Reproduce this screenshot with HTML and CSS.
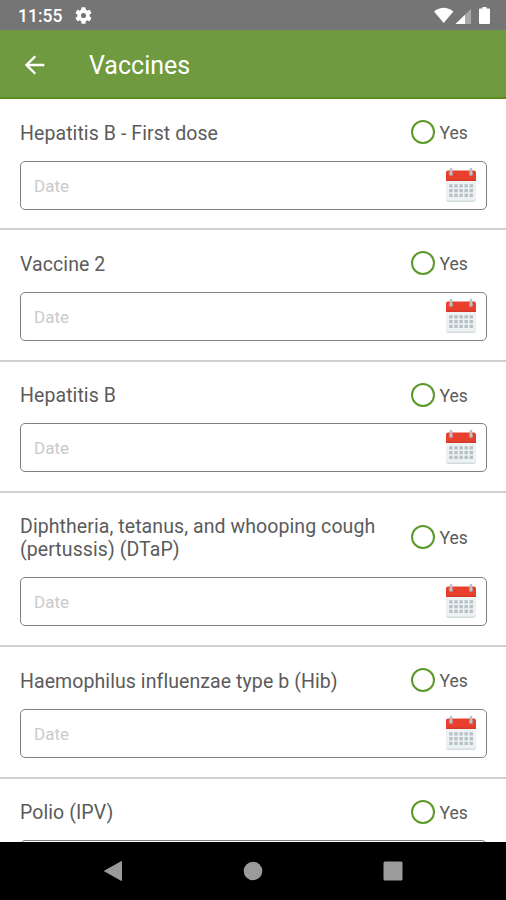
FILE: index.html
```html
<!DOCTYPE html>
<html lang="en">
<head>
<meta charset="utf-8">
<title>Vaccines</title>
<link rel="stylesheet" href="styles.css">
</head>
<body>
<svg class="defs" aria-hidden="true">
  <symbol id="calendar" viewBox="0 0 32 36">
    <rect x="1.2" y="14" width="29.6" height="21" rx="2.5" fill="#d3dcdf"/>
    <path d="M1.2 12h29.6v19.500a2 2 0 0 1-2 2H3.200a2 2 0 0 1-2-2z" fill="#edf2f3"/>
    <path d="M1 13.500V5.500a2 2 0 0 1 2-2h26a2 2 0 0 1 2 2v8z" fill="#e8402c"/>
    <path d="M1 12.500h30v1.500H1z" fill="#d43a2a"/>
    <path d="M4.200 18.800h24M4.200 23.600h24M4.200 28.400h24" stroke="#b6c0c5" stroke-width="3.200" stroke-dasharray="3.400 1.700"/>
    <g fill="#c9817a"><circle cx="6" cy="7" r="2.300"/><circle cx="26" cy="7" r="2.300"/></g>
    <path d="M6 2v5M26 2v5" stroke="#b9c2c6" stroke-width="2.600" stroke-linecap="round"/>
  </symbol>
</svg>
<div class="screen">
  <header class="status">
    <span class="clock">11:55</span>
    <svg class="gear" viewBox="2 2 20 20"><path fill="#fff" d="M19.140 12.940c.04-.3.06-.61.06-.94 0-.32-.02-.64-.07-.94l2.030-1.580a.49.49 0 0 0 .12-.61l-1.920-3.320a.488.488 0 0 0-.59-.22l-2.390.96c-.5-.38-1.030-.7-1.620-.94l-.36-2.540a.484.484 0 0 0-.48-.41h-3.840c-.24 0-.43.17-.47.41l-.36 2.540c-.59.24-1.130.57-1.620.94l-2.390-.96c-.22-.08-.47 0-.59.22L2.740 8.870c-.12.21-.08.47.12.61l2.030 1.580c-.05.3-.09.63-.09.94s.02.64.07.94l-2.030 1.580a.49.49 0 0 0-.12.61l1.920 3.320c.12.22.37.29.59.22l2.390-.96c.5.38 1.030.7 1.620.94l.36 2.540c.05.24.24.41.48.41h3.840c.24 0 .44-.17.47-.41l.36-2.540c.59-.24 1.130-.56 1.620-.94l2.390.96c.22.08.47 0 .59-.22l1.920-3.320c.12-.22.07-.47-.12-.61zM12 15a3 3 0 1 1 0-6 3 3 0 0 1 0 6z"/></svg>
    <svg class="signals" viewBox="0 0 58 18">
      <path d="M0 4.500Q9.700-3 19.400 4.500L9.700 16z" fill="#fff"/>
      <path d="M37 2v15H21.500z" fill="#a9a9a9"/>
      <path d="M31 7.800V17h-9.500z" fill="#fff"/>
      <path d="M48.500 0h4v1.500h2.500q1 0 1 1V16q0 1-1 1h-9q-1 0-1-1V2.500q0-1 1-1h2.500z" fill="#fff"/>
    </svg>
  </header>
  <div class="appbar">
    <svg class="back" viewBox="0 0 20 20"><path d="M19.300 10H2M10.300 1.200L1.500 10l8.800 8.800" fill="none" stroke="#fff" stroke-width="2.300"/></svg>
    <h1>Vaccines</h1>
  </div>
  <main class="list">
    <section class="item">
      <div class="head"><span class="name">Hepatitis B - First dose</span><label class="yes"><i class="radio"></i><span>Yes</span></label></div>
      <div class="field"><span>Date</span><svg class="cal"><use href="#calendar"/></svg></div>
    </section>
    <section class="item">
      <div class="head"><span class="name">Vaccine 2</span><label class="yes"><i class="radio"></i><span>Yes</span></label></div>
      <div class="field"><span>Date</span><svg class="cal"><use href="#calendar"/></svg></div>
    </section>
    <section class="item">
      <div class="head"><span class="name">Hepatitis B</span><label class="yes"><i class="radio"></i><span>Yes</span></label></div>
      <div class="field"><span>Date</span><svg class="cal"><use href="#calendar"/></svg></div>
    </section>
    <section class="item tall">
      <div class="head"><span class="name">Diphtheria, tetanus, and whooping cough (pertussis) (DTaP)</span><label class="yes"><i class="radio"></i><span>Yes</span></label></div>
      <div class="field"><span>Date</span><svg class="cal"><use href="#calendar"/></svg></div>
    </section>
    <section class="item">
      <div class="head"><span class="name">Haemophilus influenzae type b (Hib)</span><label class="yes"><i class="radio"></i><span>Yes</span></label></div>
      <div class="field"><span>Date</span><svg class="cal"><use href="#calendar"/></svg></div>
    </section>
    <section class="item">
      <div class="head"><span class="name">Polio (IPV)</span><label class="yes"><i class="radio"></i><span>Yes</span></label></div>
      <div class="field"></div>
    </section>
  </main>
  <nav class="navbar">
    <svg viewBox="0 0 20 22"><path d="M1.500 11L18.500 1.500v19z" fill="#9b9b9b" stroke="#9b9b9b" stroke-linejoin="round"/></svg>
    <svg viewBox="0 0 20 22"><circle cx="10" cy="11" r="9.300" fill="#9b9b9b"/></svg>
    <svg viewBox="0 0 20 22"><rect x=".5" y="1.500" width="19" height="19" rx="1.500" fill="#9b9b9b"/></svg>
  </nav>
</div>
</body>
</html>
```

FILE: styles.css
```css
* { box-sizing: border-box; }
body { margin: 0; font-family: Roboto, "Liberation Sans", sans-serif; color: #5b5b5b; background: #fff; }
.defs { display: none; }
.screen { width: 506px; height: 900px; display: flex; flex-direction: column; overflow: hidden; }
.status { flex: none; height: 30px; background: #757575; display: flex; align-items: center; padding: 1px 14px 0 18px; }
.clock { color: #fff; font-size: 17.500px; font-weight: 500; line-height: 28px; width: 44px; }
.gear { width: 17px; height: 17px; margin-left: 13px; }
.signals { width: 58px; height: 18px; margin-left: auto; }
.appbar { flex: none; height: 69px; background: #6f9a3f; border-bottom: 2px solid #588c1c; display: flex; align-items: center; padding: 3px 0 0 25px; }
.back { width: 20px; height: 20px; margin-top: -1px; }
.appbar h1 { margin: 1px 0 0 44px; font-size: 25px; font-weight: 400; line-height: 30px; color: #fff; }
.list { flex: 1; min-height: 0; overflow: hidden; }
.item { height: 131.3px; padding: 21px 19px 0 20px; border-bottom: 2px solid #d0d0d0; }
.item.tall { height: 154.500px; }
.head { display: flex; align-items: center; justify-content: space-between; height: 24px; margin-bottom: 16.500px; }
.tall .head { height: 47px; }
.name { width: 370px; padding-top: 2px; font-size: 19.500px; line-height: 23px; letter-spacing: .08px; }
.yes { display: flex; align-items: center; width: 76.500px; font-size: 17.500px; line-height: 24px; }
.yes span { padding-top: 2px; }
.radio { width: 24px; height: 24px; margin-right: 5px; border: 2.500px solid #5d982a; border-radius: 50%; }
.field { height: 49px; border: 1px solid #808080; border-radius: 5px; display: flex; align-items: center; justify-content: space-between; padding: 0 9px 0 13px; font-size: 17px; color: #cacaca; }
.field span { padding-top: 1px; }
.cal { width: 32px; height: 36px; margin-top: -1px; }
.navbar { flex: none; height: 58px; background: #000; display: flex; justify-content: space-between; padding: 18px 103px; }
.navbar svg { width: 20px; height: 22px; }
```
